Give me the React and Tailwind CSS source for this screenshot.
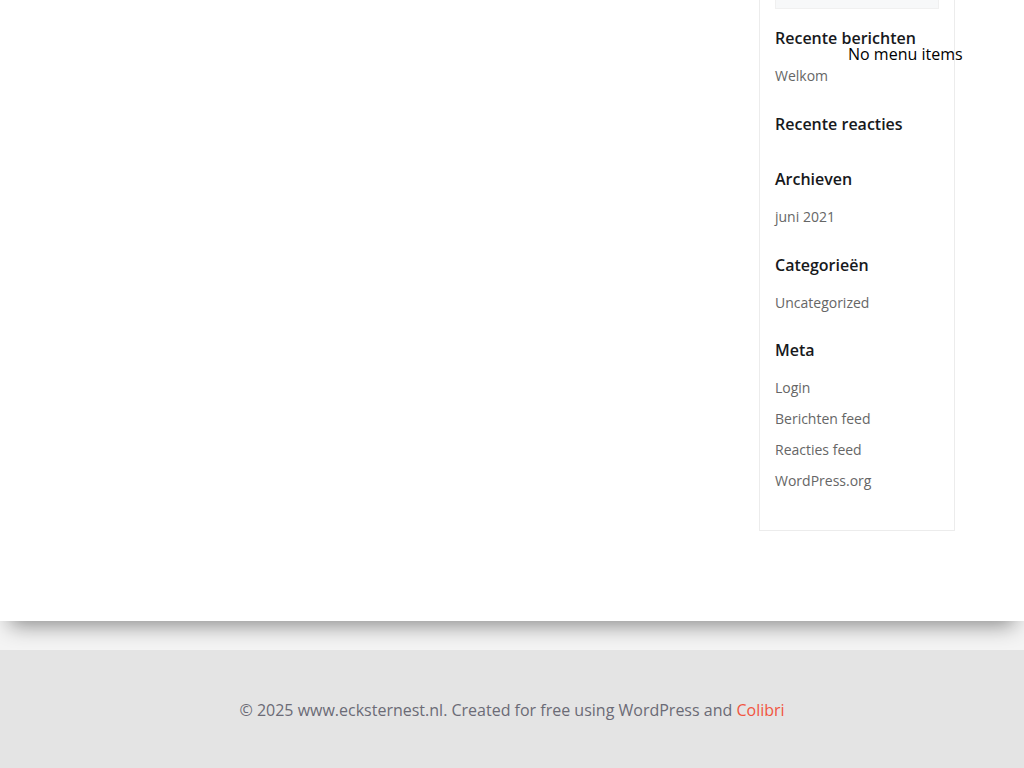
import React from 'react';

const widgets = [
    { title: 'Recente berichten', items: ['Welkom'] },
    { title: 'Recente reacties', items: [] },
    { title: 'Archieven', items: ['juni 2021'] },
    { title: 'Categorieën', items: ['Uncategorized'] },
    { title: 'Meta', items: ['Login', 'Berichten feed', 'Reacties feed', 'WordPress.org'] },
];

const Widget = ({ title, items }) => (
    <div>
        <h4 className="h-[24px] leading-[24px] mb-[11px] text-[16px] font-semibold text-[#17191c]">{title}</h4>
        <ul>
            {items.map((item) => (
                <li key={item} className="h-[30.75px] leading-[30.75px] text-[14px] text-[#666666]">
                    <a href="#">{item}</a>
                </li>
            ))}
        </ul>
    </div>
);

export default function App() {
    return (
        <div className="relative min-h-[768px] bg-white font-['Open_Sans',sans-serif]">
            <div className="relative z-10 bg-white h-[621px] flex shadow-[0_14px_20px_-10px_rgba(0,0,0,0.45)]">
                <div className="flex-1" />
                <aside className="w-[196px] mr-[69px] h-[531px] border border-t-0 border-[#ececec] px-[15px]">
                    <div className="h-[9px] bg-[#f7f8f9] border border-t-0 border-[#f0f0f0]" />
                    <div className="mt-[17px] flex flex-col gap-[20px]">
                        {widgets.map((w) => (
                            <Widget key={w.title} {...w} />
                        ))}
                    </div>
                </aside>
            </div>
            <div className="h-[29px] bg-[#f4f4f4]" />
            <footer className="h-[118px] bg-[#e4e4e4] flex items-center justify-center pt-[2px]">
                <p className="text-[16px] text-[#6b6b76]">
                    © 2025 www.ecksternest.nl. Created for free using WordPress and{' '}
                    <a href="#" className="text-[#f1553f]">Colibri</a>
                </p>
            </footer>
            <div className="absolute z-20 left-[848px] top-[43px] text-[16px] leading-[22px] text-black">
                No menu items
            </div>
        </div>
    );
}
